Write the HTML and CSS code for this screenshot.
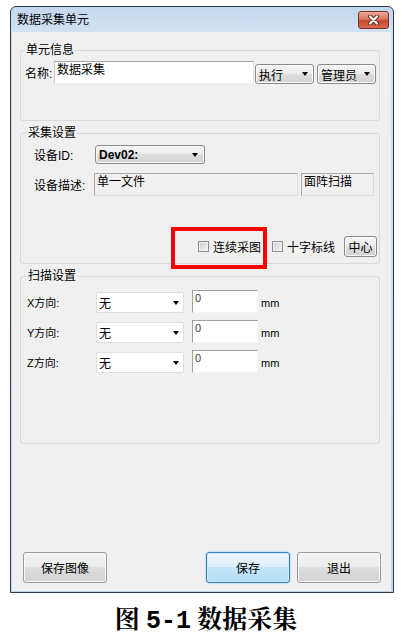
FILE: index.html
```html
<!DOCTYPE html>
<html lang="zh-CN">
<head>
    <meta charset="UTF-8">
    <title>数据采集单元</title>
    <link rel="stylesheet" href="styles.css">
</head>
<body>
    <div class="window">
        <div class="titlebar">
            <span class="title">数据采集单元</span>
            <div class="close-btn">
                <svg width="13" height="10" viewBox="0 0 13 10">
                    <path d="M3 1.5 L10 8.5 M10 1.5 L3 8.5" stroke="#5a2a20" stroke-width="4" stroke-linecap="round"/>
                    <path d="M3 1.5 L10 8.5 M10 1.5 L3 8.5" stroke="#ffffff" stroke-width="2.2" stroke-linecap="round"/>
                </svg>
            </div>
        </div>

        <div class="client">
            <fieldset class="group group-unit">
                <legend>单元信息</legend>
                <div class="name-row">
                    <span class="name-label">名称:</span>
                    <div class="textbox name-box">数据采集</div>
                    <div class="btn combo-btn exec-btn">执行<span class="arrow"></span></div>
                    <div class="btn combo-btn admin-btn">管理员<span class="arrow"></span></div>
                </div>
            </fieldset>

            <fieldset class="group group-collect">
                <legend>采集设置</legend>
                <div class="dev-row">
                    <span class="dev-label">设备ID:</span>
                    <div class="btn combo-btn dev-select">Dev02:<span class="arrow"></span></div>
                </div>
                <div class="desc-row">
                    <span class="dev-label">设备描述:</span>
                    <div class="readonly desc-main">单一文件</div>
                    <div class="readonly desc-type">面阵扫描</div>
                </div>
                <div class="check-row">
                    <span class="checkbox"></span>
                    <span class="check-text">连续采图</span>
                    <span class="checkbox second"></span>
                    <span class="check-text">十字标线</span>
                    <div class="btn center-btn">中心</div>
                </div>
            </fieldset>

            <fieldset class="group group-scan">
                <legend>扫描设置</legend>
                <div class="axis-row">
                    <span class="axis-label">X方向:</span>
                    <div class="combo-white">无<span class="arrow"></span></div>
                    <div class="textbox axis-input">0</div>
                    <span class="unit">mm</span>
                </div>
                <div class="axis-row">
                    <span class="axis-label">Y方向:</span>
                    <div class="combo-white">无<span class="arrow"></span></div>
                    <div class="textbox axis-input">0</div>
                    <span class="unit">mm</span>
                </div>
                <div class="axis-row">
                    <span class="axis-label">Z方向:</span>
                    <div class="combo-white">无<span class="arrow"></span></div>
                    <div class="textbox axis-input">0</div>
                    <span class="unit">mm</span>
                </div>
            </fieldset>

            <div class="footer">
                <div class="btn action-btn">保存图像</div>
                <div class="btn action-btn default-btn">保存</div>
                <div class="btn action-btn exit-btn">退出</div>
            </div>
        </div>
    </div>

    <div class="highlight"></div>

    <div class="caption">图 <span class="fig-num">5-1</span> 数据采集</div>
</body>
</html>
```

FILE: styles.css
```css
body {
    margin: 0;
    background-color: #ffffff;
    font-family: "Liberation Sans", "Noto Sans CJK SC", sans-serif;
    font-size: 12px;
    color: #000;
}

.window {
    width: 384px;
    height: 587px;
    box-sizing: border-box;
    margin: 6px 0 0 10px;
    border: 1px solid #2d3a49;
    border-radius: 6px 6px 0 0;
    background: linear-gradient(#c3d7ee, #d2e2f3 25px, #c2d6ed);
    display: flex;
    flex-direction: column;
}

.titlebar {
    height: 25px;
    flex: none;
    display: flex;
    align-items: center;
    justify-content: space-between;
    padding: 0 4px 0 6px;
}

.title {
    font-size: 12px;
    line-height: 14px;
}

.close-btn {
    width: 31px;
    height: 18px;
    box-sizing: border-box;
    border: 1px solid #7a3328;
    border-radius: 3px;
    background: linear-gradient(#eba999, #d9745f 45%, #c7472f 55%, #d86a4f);
    display: flex;
    align-items: center;
    justify-content: center;
}

.client {
    flex: 1;
    margin: 0 2px 1px 1px;
    background-color: #f0f0f0;
    display: flex;
    flex-direction: column;
    padding: 11px 11px 8px 8px;
}

.group {
    margin: 0 0 5px 0;
    border: 1px solid #d5d9de;
    border-radius: 3px;
    min-width: 0;
}

.group legend {
    padding: 0 1px;
    font-size: 12px;
    line-height: 14px;
}

/* 单元信息 */
.group-unit {
    padding: 4px 3px 36px 4px;
}

.name-row {
    display: flex;
    align-items: flex-end;
    height: 23px;
}

.name-label {
    width: 29px;
    align-self: center;
}

.textbox {
    box-sizing: border-box;
    background-color: #fff;
    border: 1px solid;
    border-color: #a4a7ad #e2e3ea #eef1f4 #c9ccd2;
    padding: 1px 2px;
    line-height: 14px;
}

.name-box {
    width: 200px;
    height: 23px;
}

.btn {
    box-sizing: border-box;
    border: 1px solid #8a8a8a;
    border-radius: 3px;
    background: linear-gradient(#f4f4f4, #ececec 50%, #dedede 50%, #d2d2d2);
    box-shadow: inset 0 0 0 1px #fafafa;
    display: flex;
    align-items: center;
}

.combo-btn {
    height: 20px;
    justify-content: space-between;
    padding: 0 5px 0 3px;
}

.exec-btn {
    width: 59px;
    margin-left: 1px;
}

.admin-btn {
    width: 59px;
    margin-left: 3px;
}

.arrow {
    width: 0;
    height: 0;
    border-left: 3.5px solid transparent;
    border-right: 3.5px solid transparent;
    border-top: 4px solid #000;
}

/* 采集设置 */
.group-collect {
    padding: 5px 2px 6px 6px;
}

.dev-row {
    display: flex;
    align-items: center;
    height: 19px;
    padding-left: 7px;
}

.dev-label {
    width: 60px;
}

.dev-select {
    width: 110px;
    height: 19px;
    margin-left: 1px;
    font-weight: bold;
    padding-right: 6px;
}

.desc-row {
    display: flex;
    align-items: center;
    height: 23px;
    margin-top: 9px;
    padding-left: 7px;
}

.readonly {
    box-sizing: border-box;
    height: 23px;
    background-color: #f0f0f0;
    border: 1px solid;
    border-color: #a7a7a7 #dcdcdc #dcdcdc #a7a7a7;
    padding: 1px 2px;
    line-height: 14px;
}

.desc-main {
    width: 204px;
}

.desc-type {
    width: 73px;
    margin-left: 3px;
}

.check-row {
    display: flex;
    align-items: center;
    justify-content: flex-end;
    height: 21px;
    margin-top: 40px;
}

.checkbox {
    width: 11px;
    height: 11px;
    box-sizing: border-box;
    border: 1px solid #8e8f8f;
    background: linear-gradient(135deg, #c8ccd2, #f6f6f6);
    box-shadow: inset 0 0 0 1px #f0f0f0;
    margin-right: 4px;
}

.checkbox.second {
    margin-left: 11px;
}

.check-text {
    width: 48px;
}

.center-btn {
    width: 33px;
    height: 21px;
    margin-left: 9px;
    justify-content: center;
}

/* 扫描设置 */
.group-scan {
    padding: 7px 3px 70px 6px;
}

.axis-row {
    display: flex;
    align-items: flex-end;
    height: 23px;
}

.axis-row + .axis-row {
    margin-top: 7px;
}

.axis-label {
    width: 69px;
    font-size: 11px;
    align-self: center;
}

.combo-white {
    width: 88px;
    height: 21px;
    box-sizing: border-box;
    background-color: #fff;
    border: 1px solid #dedede;
    border-radius: 2px;
    display: flex;
    align-items: center;
    justify-content: space-between;
    padding: 0 4px 0 2px;
}

.axis-input {
    width: 66px;
    height: 23px;
    margin-left: 8px;
    font-size: 11px;
    color: #4a3c30;
    border-color: #a0a0a0 #f4f4f4 #f4f4f4 #a0a0a0;
    line-height: 12px;
}

.unit {
    font-size: 11px;
    margin-left: 3px;
    align-self: center;
    margin-top: 3px;
}

/* 底部按钮 */
.footer {
    display: flex;
    margin-top: auto;
    margin-right: -1px;
    padding-left: 3px;
    height: 31px;
}

.action-btn {
    width: 84px;
    justify-content: center;
    border-color: #9a9a9a;
}

.default-btn {
    margin-left: auto;
    border-color: #3c7fb1;
    background: linear-gradient(#eaf6fd, #dcf0fb 50%, #c4e5f8 50%, #b3ddf5);
    box-shadow: inset 0 0 0 1px #cbe9fa, 0 0 2px #74c4f0;
}

.exit-btn {
    margin-left: 7px;
}

.highlight {
    position: absolute;
    left: 171px;
    top: 227px;
    width: 96px;
    height: 42px;
    box-sizing: border-box;
    border: 4px solid #ff0000;
}

.caption {
    margin-top: 13px;
    padding-right: 6px;
    text-align: center;
    font-family: "Liberation Serif", "Noto Serif CJK SC", "Noto Sans CJK SC", serif;
    font-weight: bold;
    font-size: 25px;
    line-height: 28px;
}

.fig-num {
    font-family: "Liberation Mono", monospace;
}
```
